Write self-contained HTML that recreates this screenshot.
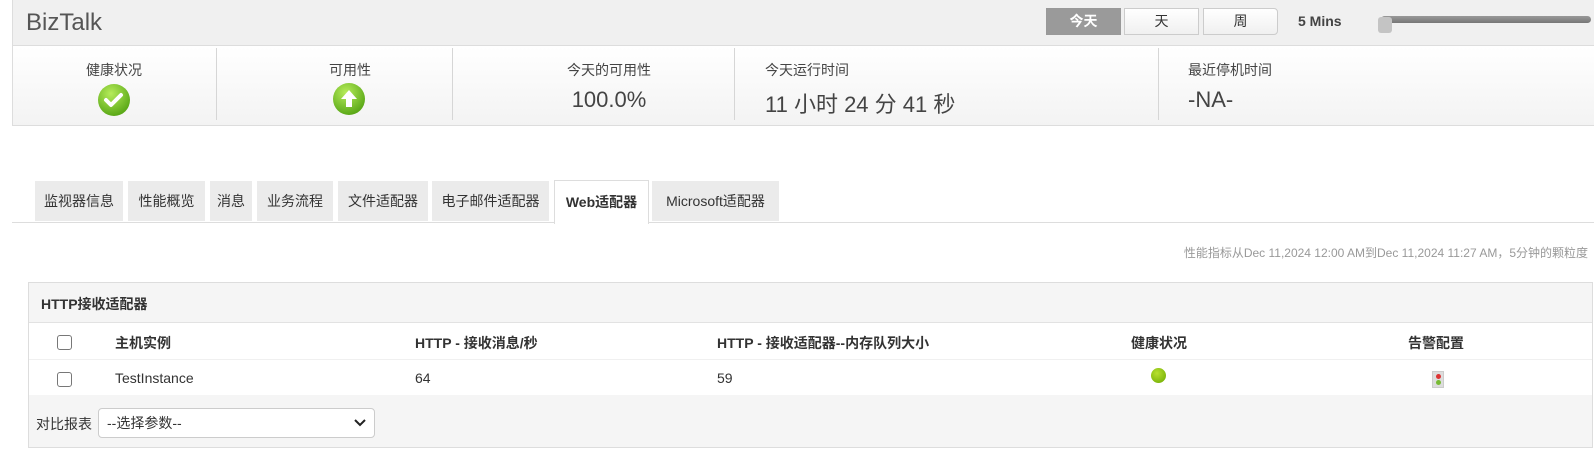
<!DOCTYPE html>
<html><head><meta charset="utf-8"><style>
*{box-sizing:border-box;margin:0;padding:0}
body{width:1594px;height:471px;background:#fff;font-family:"Liberation Sans","Noto Sans CJK SC",sans-serif;color:#333;position:relative;overflow:hidden}
.abs{position:absolute}
.top{left:12px;top:0;width:1600px;height:126px;border:1px solid #ddd;border-right:none;border-top:none}
.tbar{left:12px;top:0;width:1600px;height:46px;background:#f0f0f0;border-bottom:1px solid #ddd}
.stats{left:13px;top:47px;width:1600px;height:78px;background:linear-gradient(#fff,#f3f3f3)}
.div{top:48px;width:1px;height:72px;background:#d6d6d6}
.lbl{font-size:14px;color:#444}
.big{font-size:22px;color:#444}
.btn{top:8px;height:27px;border:1px solid #ccc;background:linear-gradient(#fff,#f0f0f0);font-size:14px;text-align:center;line-height:25px;color:#333}
.tab{top:181px;height:40px;background:#ebebeb;font-size:14px;line-height:40px;text-align:center;color:#333}
.cb{width:15px;height:15px;border:1px solid #777;border-radius:3px;background:#fff}
</style></head><body>
<div class="abs tbar"></div>
<div class="abs stats"></div>
<div class="abs top"></div>
<div class="abs" style="left:26px;top:9px;font-size:24px;color:#555">BizTalk</div>
<div class="abs btn" style="left:1046px;width:75px;background:#9a9a9a;color:#fff;border-color:#999;font-weight:bold">今天</div>
<div class="abs btn" style="left:1124px;width:75px">天</div>
<div class="abs btn" style="left:1203px;width:75px;border-radius:0 4px 4px 0">周</div>
<div class="abs" style="left:1298px;top:13px;font-size:14px;font-weight:bold;color:#444">5 Mins</div>
<div class="abs" style="left:1381px;top:16px;width:210px;height:7px;border-radius:4px;background:linear-gradient(#999,#777)"></div>
<div class="abs" style="left:1378px;top:17px;width:14px;height:16px;border-radius:3px;background:#c4c4c4"></div>

<div class="abs div" style="left:216px"></div>
<div class="abs div" style="left:452px"></div>
<div class="abs div" style="left:734px"></div>
<div class="abs div" style="left:1158px"></div>
<div class="abs lbl" style="left:0;width:228px;text-align:center;top:60px">健康状况</div>
<svg class="abs" style="left:97px;top:83px" width="34" height="34"><defs><radialGradient id="g" cx="40%" cy="30%" r="70%"><stop offset="0" stop-color="#b6ec5a"/><stop offset="1" stop-color="#5aa817"/></radialGradient></defs><circle cx="17" cy="17" r="16" fill="url(#g)"/><path d="M9 17l5 5 10-10" stroke="#fff" stroke-width="4" fill="none" stroke-linecap="round" stroke-linejoin="round"/></svg>
<div class="abs lbl" style="left:216px;width:268px;text-align:center;top:60px">可用性</div>
<svg class="abs" style="left:332px;top:82px" width="34" height="34"><circle cx="17" cy="17" r="16" fill="url(#g)"/><path d="M17 8l-8 9h5v8h6v-8h5z" fill="#fff"/></svg>
<div class="abs lbl" style="left:452px;width:314px;text-align:center;top:60px">今天的可用性</div>
<div class="abs big" style="left:452px;width:314px;text-align:center;top:87px">100.0%</div>
<div class="abs lbl" style="left:765px;top:60px">今天运行时间</div>
<div class="abs big" style="left:765px;top:87px">11 小时 24 分 41 秒</div>
<div class="abs lbl" style="left:1188px;top:60px">最近停机时间</div>
<div class="abs big" style="left:1188px;top:87px">-NA-</div>

<div class="abs" style="left:12px;top:222px;width:1590px;height:1px;background:#ddd"></div>
<div class="abs tab" style="left:35px;width:88px">监视器信息</div>
<div class="abs tab" style="left:128px;width:77px">性能概览</div>
<div class="abs tab" style="left:210px;width:42px">消息</div>
<div class="abs tab" style="left:257px;width:76px">业务流程</div>
<div class="abs tab" style="left:338px;width:90px">文件适配器</div>
<div class="abs tab" style="left:432px;width:117px">电子邮件适配器</div>
<div class="abs tab" style="left:554px;width:95px;top:180px;height:44px;background:#fff;border:1px solid #ddd;border-bottom:none;font-weight:bold;line-height:43px">Web适配器</div>
<div class="abs tab" style="left:652px;width:127px">Microsoft适配器</div>

<div class="abs" style="right:6px;top:244px;font-size:12px;color:#999">性能指标从Dec 11,2024 12:00 AM到Dec 11,2024 11:27 AM，5分钟的颗粒度</div>

<div class="abs" style="left:28px;top:282px;width:1565px;height:166px;border:1px solid #ddd;background:#f5f5f5"></div>
<div class="abs" style="left:41px;top:294px;font-size:14px;font-weight:bold;color:#333">HTTP接收适配器</div>
<div class="abs" style="left:29px;top:322px;width:1563px;height:73px;background:#fff;border-top:1px solid #e2e2e2"></div>
<div class="abs" style="left:29px;top:359px;width:1563px;height:1px;background:#f0f0f0"></div>
<div class="abs cb" style="left:57px;top:335px"></div>
<div class="abs cb" style="left:57px;top:372px"></div>
<div class="abs" style="left:115px;top:333px;font-size:14px;font-weight:bold">主机实例</div>
<div class="abs" style="left:415px;top:333px;font-size:14px;font-weight:bold">HTTP - 接收消息/秒</div>
<div class="abs" style="left:717px;top:333px;font-size:14px;font-weight:bold">HTTP - 接收适配器--内存队列大小</div>
<div class="abs" style="left:1131px;top:333px;font-size:14px;font-weight:bold">健康状况</div>
<div class="abs" style="left:1408px;top:333px;font-size:14px;font-weight:bold">告警配置</div>
<div class="abs" style="left:115px;top:370px;font-size:14px">TestInstance</div>
<div class="abs" style="left:415px;top:370px;font-size:14px">64</div>
<div class="abs" style="left:717px;top:370px;font-size:14px">59</div>
<div class="abs" style="left:1151px;top:368px;width:15px;height:15px;border-radius:50%;background:radial-gradient(circle at 40% 35%,#b8e030,#6aa800)"></div>
<div class="abs" style="left:1432px;top:371px;width:12px;height:17px;background:#ddd;border:1px solid #ccc"></div>
<div class="abs" style="left:1436px;top:374px;width:5px;height:5px;border-radius:50%;background:#d33"></div>
<div class="abs" style="left:1436px;top:380px;width:5px;height:5px;border-radius:50%;background:#7b3"></div>
<div class="abs" style="left:36px;top:414px;font-size:14px">对比报表</div>
<div class="abs" style="left:98px;top:408px;width:277px;height:30px;border:1px solid #ccc;border-radius:4px;background:#fff;font-size:14px;line-height:28px;padding-left:8px">--选择参数--
<svg class="abs" style="right:8px;top:10px" width="12" height="8"><path d="M1 1l5 5 5-5" stroke="#222" stroke-width="2" fill="none"/></svg></div>
</body></html>
